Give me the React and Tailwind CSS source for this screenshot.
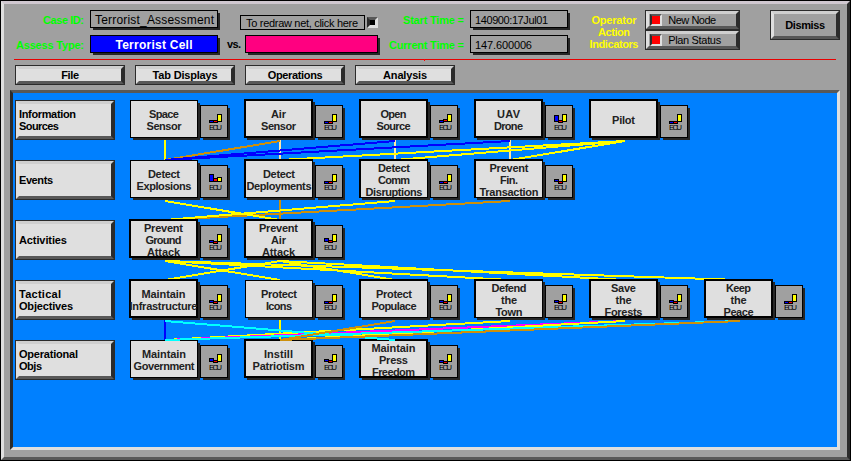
import { useLayoutEffect, useRef, useState } from "react";

// One line of text, tracked so that it takes exactly `w` pixels.
function Fit({ w, children, className = "" }) {
  const ref = useRef(null);
  const [spacing, setSpacing] = useState(0);
  useLayoutEffect(() => {
    const natural = ref.current.getBoundingClientRect().width;
    setSpacing((w - natural) / Math.max(1, children.length - 1));
  }, []);
  return (
    <span className={`block whitespace-nowrap ${className}`} style={{ width: w }}>
      <span ref={ref} className="inline-block" style={{ letterSpacing: spacing }}>{children}</span>
    </span>
  );
}

const bevel = "border border-[#2b2b2b]";
const raised = "border-[3px] border-t-[#cfcfcf] border-l-[#dfdfdf] border-r-[#2b2b2b] border-b-[#585858]";
const shadow = "shadow-[2.5px_2.5px_0_-0.5px_#262626]";

function Field({ className = "", children }) {
  return (
    <div className={`flex h-[18px] shrink-0 items-center border border-black ${shadow} ${className}`}>{children}</div>
  );
}

function MenuButton({ text, w, className }) {
  return (
    <button className={`flex h-5 ${bevel} ${className}`}>
      <span className={`flex h-full w-full items-center justify-center bg-[#dfdfdf] ${raised}`}>
        <Fit w={w}>{text}</Fit>
      </span>
    </button>
  );
}

function Indicator({ text, w }) {
  return (
    <button className={`flex h-5 w-[95px] ${bevel}`}>
      <span className={`flex h-full w-full items-center bg-[#a0a0a0] pl-px font-normal text-[11px] ${raised}`}>
        <span className="h-3 w-3 border-2 border-t-[#585858] border-l-[#2b2b2b] border-r-[#dfdfdf] border-b-[#dfdfdf] bg-[#ff0000]" />
        <Fit w={w} className="ml-[6px]">{text}</Fit>
      </span>
    </button>
  );
}

const frames = {
  thin: "h-[38px] w-[68px] border",
  mid: "-mt-px -ml-px h-[39px] w-[69px] border-t-2 border-l-2 border-r border-b",
  thick: "-mt-px -ml-px h-[39px] w-[69px] border-2",
};

// bars: [blueTop, blueBottom, redTop, redBottom, yellowTop]
function Node({ lines, frame, bars }) {
  const [bt, bb, rt, rb, yt] = bars;
  return (
    <div className="flex h-10 w-[115px] shrink-0 items-start">
      <div className="h-[38px] w-[68px] shrink-0">
        <div className={`border-black bg-[#dfdfdf] ${shadow} ${frames[frame]}`}>
          <div className="flex h-full items-center justify-center overflow-y-clip">
            <div className="flex translate-y-px flex-col items-center leading-[12px] text-[#222]">
              {lines.map(([t, w]) => <Fit key={t} w={w}>{t}</Fit>)}
            </div>
          </div>
        </div>
      </div>
      <div className={`ml-[2px] mt-[5px] h-[33px] w-7 border border-black bg-[#a0a0a0] ${shadow}`}>
        <svg className="block h-[18px] w-[26px]" viewBox="1 1 26 18" shapeRendering="crispEdges">
          <rect x="9" y={bt} width="5" height={bb - bt} />
          <rect x="13" y={rt} width="5" height={rb - rt} />
          <rect x="17" y={yt} width="5" height={17 - yt} />
          <rect x="10" y={bt + 1} width="3" height={bb - bt - 2} fill="#0000ff" />
          <rect x="14" y={rt + 1} width="3" height={rb - rt - 2} fill="#ff0000" />
          <rect x="18" y={yt + 1} width="3" height={15 - yt} fill="#ffff00" />
        </svg>
        <Fit w={13} className="ml-2 font-normal text-[8px] leading-[8px]">ECU</Fit>
      </div>
    </div>
  );
}

const n = (frame, bars, ...lines) => ({ frame, bars, lines });
const rows = [
  {
    label: [["Information", 57], ["Sources", 40]],
    nodes: [
      n("thin", [15, 18, 15, 18, 9], ["Space", 30], ["Sensor", 35]),
      n("thick", [16, 19, 16, 19, 9], ["Air", 15], ["Sensor", 35]),
      n("thick", [15, 18, 14, 17, 9], ["Open", 26], ["Source", 34]),
      n("thick", [10, 17, 15, 18, 9], ["UAV", 23], ["Drone", 29]),
      n("thick", [16, 19, 16, 19, 9], ["Pilot", 23]),
    ],
  },
  {
    label: [["Events", 34]],
    nodes: [
      n("thin", [9, 17, 13, 17, 12], ["Detect", 32], ["Explosions", 55]),
      n("mid", [16, 19, 16, 19, 9], ["Detect", 32], ["Deployments", 65]),
      n("mid", [16, 19, 16, 19, 9], ["Detect", 32], ["Comm", 32], ["Disruptions", 57]),
      n("mid", [14, 17, 16, 19, 9], ["Prevent", 39], ["Fin.", 18], ["Transaction", 59]),
    ],
  },
  {
    label: [["Activities", 48]],
    nodes: [
      n("thick", [15, 18, 16, 19, 9], ["Prevent", 39], ["Ground", 36], ["Attack", 33]),
      n("thick", [13, 17, 15, 18, 9], ["Prevent", 39], ["Air", 15], ["Attack", 33]),
    ],
  },
  {
    label: [["Tactical", 42], ["Objectives", 54]],
    nodes: [
      n("thick", [15, 18, 16, 19, 9], ["Maintain", 44], ["Infrastructure", 68]),
      n("thin", [16, 19, 16, 19, 9], ["Protect", 36], ["Icons", 26]),
      n("mid", [15, 18, 16, 19, 9], ["Protect", 36], ["Populace", 45]),
      n("mid", [15, 18, 16, 19, 9], ["Defend", 35], ["the", 16], ["Town", 27]),
      n("thick", [15, 18, 16, 19, 9], ["Save", 25], ["the", 16], ["Forests", 38]),
      n("thick", [16, 19, 16, 19, 9], ["Keep", 25], ["the", 16], ["Peace", 30]),
    ],
  },
  {
    label: [["Operational", 59], ["Objs", 23]],
    nodes: [
      n("thin", [13, 17, 15, 18, 9], ["Maintain", 44], ["Government", 61]),
      n("thick", [14, 17, 15, 18, 9], ["Instill", 29], ["Patriotism", 52]),
      n("thick", [15, 18, 16, 19, 9], ["Maintain", 44], ["Press", 29], ["Freedom", 43]),
    ],
  },
];

const Y = "#ffff00", O = "#cc900c", B = "#0000ff", C = "#00ffff", M = "#ff00ff", P = "#ffe8a8";
// [x1, y1, x2, y2, colour]
const lower = [
  [165, 140, 165, 160, Y],
  [280, 140, 280, 160, P],
  [395, 140, 395, 160, P],
  [510, 140, 510, 160, P],
  [280, 141, 165, 160, O],
  [395, 141, 165, 160, B],
  [510, 141, 165, 160, B],
  [625, 141, 280, 160, Y],
  [625, 141, 395, 160, Y],
  [625, 141, 510, 160, Y],
  [280, 200, 280, 220, O],
  [510, 201, 165, 220, O],
  [165, 201, 280, 220, Y],
  [395, 201, 165, 220, Y],
  [165, 261, 280, 280, Y],
  [280, 261, 165, 280, Y],
  [280, 261, 395, 280, Y],
  [165, 261, 510, 280, Y],
  [280, 261, 625, 280, Y],
  [165, 261, 740, 280, Y],
  [165, 320, 165, 340, B],
  [280, 320, 280, 340, Y],
];
const upper = [
  [510, 321, 165, 340, Y],
  [625, 321, 165, 340, M],
  [625, 321, 280, 340, Y],
  [740, 321, 165, 340, C],
  [165, 321, 395, 340, C],
  [395, 321, 280, 340, O],
  [740, 321, 280, 340, O],
];

function Links({ links }) {
  return (
    <svg className="pointer-events-none absolute left-0 top-0 h-[354px] w-[824px]" viewBox="13 93 824 354" shapeRendering="crispEdges" strokeWidth="2">
      {links.map(([x1, y1, x2, y2, c], i) => <line key={i} x1={x1} y1={y1} x2={x2} y2={y2} stroke={c} />)}
    </svg>
  );
}

export default function App() {
  return (
    <div className="h-[461px] w-[851px] overflow-hidden border border-black bg-[#a0a0a0] font-['Liberation_Sans',Arial,sans-serif] text-[11px] font-bold leading-[12px] text-black">
      <div className="flex h-full flex-col border-[3px] border-t-[#d0c8d0] border-l-[#dfdfdf] border-r-[#2b2b2b] border-b-[#585858]">
        <header className="flex h-[55px] shrink-0 items-start pt-[6px]">
          <div className="flex w-20 flex-col items-end gap-[7px] text-[#00ff00]">
            <div className="flex h-[18px] items-center pt-[2px]"><Fit w={41}>Case ID:</Fit></div>
            <div className="flex h-[18px] items-center pt-[2px]"><Fit w={68}>Assess Type:</Fit></div>
          </div>
          <div className="ml-[6px] flex flex-col gap-[7px]">
            <Field className="w-32 pl-1 pt-[2px] text-[12px] font-normal"><Fit w={119}>Terrorist_Assessment</Fit></Field>
            <Field className="w-32 justify-center bg-[#0000ff] pt-[2px] text-[12px] text-white"><Fit w={77}>Terrorist Cell</Fit></Field>
          </div>
          <div className="ml-[9px] w-[152px]">
            <div className="ml-[13px] mt-[5px] flex items-center gap-[2px]">
              <div className="flex h-[15px] w-[125px] items-center border border-black pl-[5px] text-[11px] font-normal"><Fit w={112}>To redraw net, click here</Fit></div>
              <div className="flex h-[11px] w-[11px] items-center justify-center border-[3px] border-t-[#585858] border-l-[#2b2b2b] border-r-[#dfdfdf] border-b-[#dfdfdf] bg-black" />
            </div>
            <div className="mt-[5px] flex items-center">
              <Fit w={14}>vs.</Fit>
              <Field className="ml-1 w-[133px] bg-[#ff0080]" />
            </div>
          </div>
          <div className="ml-[6px] flex w-[79px] flex-col items-end gap-[7px] text-[#00ff00]">
            <div className="flex h-[18px] items-center pt-[2px]"><Fit w={61}>Start Time =</Fit></div>
            <div className="flex h-[18px] items-center pt-[2px]"><Fit w={75}>Current Time =</Fit></div>
          </div>
          <div className="ml-[6px] flex flex-col gap-[7px] text-[11px] font-normal">
            <Field className="w-[98px] pl-1 pt-[2px]"><Fit w={73}>140900:17Jul01</Fit></Field>
            <Field className="w-[98px] pl-1 pt-[2px]"><Fit w={57}>147.600006</Fit></Field>
          </div>
          <div className="ml-[21px] mt-[4px] flex w-[50px] flex-col items-center text-[#ffff00]">
            <Fit w={45}>Operator</Fit>
            <Fit w={32}>Action</Fit>
            <Fit w={49}>Indicators</Fit>
          </div>
          <div className="ml-[6px] flex flex-col">
            <Indicator text="New Node" w={48} />
            <Indicator text="Plan Status" w={53} />
          </div>
          <button className={`ml-[30px] flex h-[30px] w-[70px] ${bevel}`}>
            <span className={`flex h-full w-full items-center justify-center ${raised}`}><Fit w={40}>Dismiss</Fit></span>
          </button>
        </header>
        <div className="ml-[10px] h-px w-[822px] shrink-0 bg-[#e80000]">
          <div className="ml-[410px] h-[2px] w-px bg-[#ff0000]" />
        </div>
        <nav className="ml-[11px] mt-[5px] flex h-5 shrink-0 gap-[10px]">
          <MenuButton text="File" w={18} className="w-[110px]" />
          <MenuButton text="Tab Displays" w={65} className="w-[100px]" />
          <MenuButton text="Operations" w={55} className="w-[100px]" />
          <MenuButton text="Analysis" w={44} className="w-[100px]" />
        </nav>
        <main className="relative ml-[6px] mt-[5px] h-[360px] w-[830px] shrink-0 border-[3px] border-t-[#585858] border-l-[#2b2b2b] border-r-[#dfdfdf] border-b-[#dfdfdf] bg-[#0080ff]">
          <Links links={lower} />
          <div className="relative flex flex-col gap-5 pl-[2px] pt-[7px]">
            {rows.map((row) => (
              <div key={row.label[0][0]} className="flex h-10">
                <button className={`mr-[15px] flex h-10 w-[100px] shrink-0 text-left ${bevel}`}>
                  <span className={`flex h-full w-full flex-col justify-center bg-[#dfdfdf] ${raised}`}>
                    {row.label.map(([t, w]) => <Fit key={t} w={w}>{t}</Fit>)}
                  </span>
                </button>
                {row.nodes.map((node, i) => <Node key={i} {...node} />)}
              </div>
            ))}
          </div>
          <Links links={upper} />
        </main>
      </div>
    </div>
  );
}
